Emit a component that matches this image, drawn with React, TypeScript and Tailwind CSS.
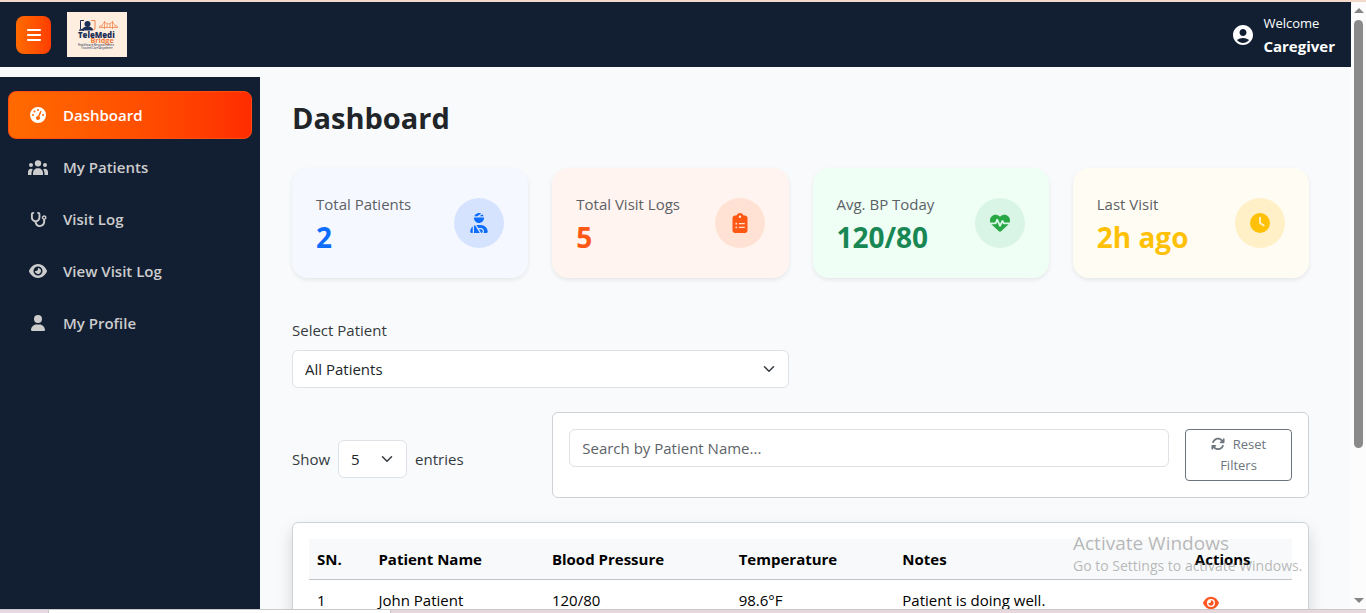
import { useState } from 'react'
import {
  FaArrowsRotate,
  FaBars,
  FaClipboardList,
  FaClock,
  FaEye,
  FaGaugeHigh,
  FaHeartPulse,
  FaStethoscope,
  FaUser,
  FaUserInjured,
} from 'react-icons/fa6'
import { MdAccountCircle } from 'react-icons/md'

const PatientsIcon = () => (
  <svg viewBox="0 0 60 45" className="h-[15px] w-5 shrink-0" fill="currentColor">
    <circle cx="30" cy="10" r="9.5" />
    <circle cx="9" cy="15" r="6" />
    <circle cx="51" cy="15" r="6" />
    <path d="M15 45v-5c0-9 6-15 15-15s15 6 15 15v5z" />
    <path d="M0 45v-9c0-6 4-10 9-10 2 0 4 .5 5.500 1.500C12 31 10.500 35 10.500 40v5z" />
    <path d="M60 45v-9c0-6-4-10-9-10-2 0-4 .5-5.500 1.500C48 31 49.500 35 49.500 40v5z" />
  </svg>
)

const navItems = [
  { label: 'Dashboard', icon: <FaGaugeHigh className="h-4 w-4" /> },
  { label: 'My Patients', icon: <PatientsIcon /> },
  { label: 'Visit Log', icon: <FaStethoscope className="h-[17px] w-[17px]" /> },
  { label: 'View Visit Log', icon: <FaEye className="h-4 w-[18px]" /> },
  { label: 'My Profile', icon: <FaUser className="h-4 w-4" /> },
]

const stats = [
  { label: 'Total Patients', value: '2', icon: FaUserInjured, card: 'bg-[#f6f8ff]', text: 'text-[#0d6efd]', badge: 'bg-[#d6e3ff] text-[#0d6efd]' },
  { label: 'Total Visit Logs', value: '5', icon: FaClipboardList, card: 'bg-[#fff4ef]', text: 'text-[#ff5714]', badge: 'bg-[#ffe2d4] text-[#ff5714]' },
  { label: 'Avg. BP Today', value: '120/80', icon: FaHeartPulse, card: 'bg-[#effff6]', text: 'text-[#198754]', badge: 'bg-[#d9f5e5] text-[#28a745]' },
  { label: 'Last Visit', value: '2h ago', icon: FaClock, card: 'bg-[#fffdf3]', text: 'text-[#ffc107]', badge: 'bg-[#fff0c7] text-[#ffc107]' },
]

const visits = [
  { id: 1, name: 'John Patient', bp: '120/80', temp: '98.6°F', notes: 'Patient is doing well.' },
]

const Logo = () => (
  <svg viewBox="0 0 60 45" className="h-[45px] w-[60px]" role="img" aria-label="TeleMedi Bridge">
    <rect width="60" height="45" fill="#fdeee0" />
    <path d="M17 8.500h-3.500v9h3" fill="none" stroke="#1b2f57" strokeWidth="1" />
    <path d="M24 8.500h4v8.500l-2 1" fill="none" stroke="#f08650" strokeWidth="1" />
    <circle cx="20.500" cy="12" r="3" fill="#1b2f57" />
    <path d="M15 18.500c0-3 2.500-4 5.500-4s5.500 1 5.500 4z" fill="#1b2f57" />
    <path d="M12 18.200h5" stroke="#1b2f57" strokeWidth="1.200" />
    <path
      d="M32 15.500h19M37.500 9v8M45.500 9v8M32 14.500c3-.5 4.500-2.500 5.500-5 1.500 3 6.500 3 8 0 1 2.500 2.500 4.500 5.500 5M40 11.500v4M43 11.500v4M35 13.500v2M48 13.500v2"
      fill="none"
      stroke="#f08650"
      strokeWidth="0.8"
    />
    <text x="11" y="25.500" fontSize="7.800" fontWeight="800" fill="#1b2f57" fontFamily="Open Sans, sans-serif">TeleMedi</text>
    <text x="23.500" y="31" fontSize="7.200" fontWeight="700" fill="#f07b3c" fontFamily="Open Sans, sans-serif">Bridge</text>
    <text x="11" y="34" fontSize="2.900" fontWeight="600" fill="#4a5470" fontFamily="Open Sans, sans-serif">Healthcare Beyond Limits</text>
    <text x="14" y="37" fontSize="2.800" fontWeight="600" fill="#4a5470" fontFamily="Open Sans, sans-serif">Trusted Care Anywhere</text>
  </svg>
)

const Chevron = () => (
  <svg
    viewBox="0 0 16 16"
    className="pointer-events-none absolute top-1/2 right-3.5 h-3 w-3 -translate-y-1/2"
    fill="none"
    stroke="#343a40"
    strokeWidth="2"
    strokeLinecap="round"
    strokeLinejoin="round"
  >
    <path d="m2 5 6 6 6-6" />
  </svg>
)

const Header = () => (
  <header className="flex h-[65px] items-center justify-between bg-[#121f33] px-4 text-white">
    <div className="flex items-center gap-4">
      <button
        aria-label="Toggle menu"
        className="flex h-[38px] w-[35px] items-center justify-center rounded-lg bg-linear-to-r from-[#ff6a00] to-[#ff3c00]"
      >
        <FaBars className="h-4 w-3.5" />
      </button>
      <Logo />
    </div>
    <div className="flex items-center gap-2">
      <MdAccountCircle className="h-6 w-6" />
      <div className="leading-[23px]">
        <div className="text-[13px]">Welcome</div>
        <div className="text-[15px] font-bold">Caregiver</div>
      </div>
    </div>
  </header>
)

const Sidebar = () => (
  <nav className="flex w-[260px] shrink-0 flex-col gap-1 bg-[#121f33] px-2 py-3.5">
    {navItems.map(({ label, icon }, index) => (
      <a
        key={label}
        href="#"
        className={`flex h-12 items-center gap-[15px] rounded-lg px-[19px] text-[15px] font-semibold ${
          index === 0
            ? 'border border-[#ff4a10] bg-linear-to-r from-[#ff6a00] to-[#ff2c00] text-white'
            : 'border border-transparent text-[#cccccc]'
        }`}
      >
        <span className="flex w-5 justify-center">{icon}</span>
        {label}
      </a>
    ))}
  </nav>
)

const StatCards = () => (
  <div className="grid grid-cols-4 gap-6">
    {stats.map(({ label, value, icon: Icon, card, text, badge }) => (
      <div key={label} className={`flex items-center justify-between rounded-2xl p-6 shadow-[0_2px_4px_rgba(0,0,0,0.08)] ${card}`}>
        <div>
          <div className="text-[15px] leading-6 font-medium text-[#5c6166]">{label}</div>
          <div className={`pt-1 text-[28px] leading-[34px] font-bold ${text}`}>{value}</div>
        </div>
        <div className={`flex h-[50px] w-[50px] items-center justify-center rounded-full ${badge}`}>
          <Icon className="h-5 w-5" />
        </div>
      </div>
    ))}
  </div>
)

const VisitTable = () => (
  <div className="rounded-md border border-[#ced2d6] bg-white p-4 shadow-[0_8px_16px_rgba(0,0,0,0.15)]">
    <table className="w-full table-fixed text-left text-black">
      <thead>
        <tr className="border-b border-[#c0c4c8] bg-[#f8f9fa]">
          <th className="w-[6.25%] p-2 font-bold">SN.</th>
          <th className="w-[17.65%] p-2 font-bold">Patient Name</th>
          <th className="w-[19%] p-2 font-bold">Blood Pressure</th>
          <th className="w-[16.65%] p-2 font-bold">Temperature</th>
          <th className="p-2 font-bold">Notes</th>
          <th className="w-[10.7%] p-2 font-bold">Actions</th>
        </tr>
      </thead>
      <tbody>
        {visits.map((visit) => (
          <tr key={visit.id} className="border-b border-[#dee2e6]">
            <td className="p-2">{visit.id}</td>
            <td className="p-2">{visit.name}</td>
            <td className="p-2">{visit.bp}</td>
            <td className="p-2">{visit.temp}</td>
            <td className="p-2">{visit.notes}</td>
            <td className="p-2">
              <button aria-label="View visit" className="flex px-2 pt-1.5 text-[#ff5722]">
                <FaEye className="h-4 w-4" />
              </button>
            </td>
          </tr>
        ))}
      </tbody>
    </table>
  </div>
)

const App = () => {
  const [patient, setPatient] = useState('All Patients')
  const [pageSize, setPageSize] = useState('5')
  const [search, setSearch] = useState('')

  const resetFilters = () => {
    setPatient('All Patients')
    setSearch('')
  }

  return (
    <div className="relative flex h-screen flex-col overflow-hidden bg-[#f8fafc] font-['Open_Sans',sans-serif] text-[15px] leading-6 text-[#343a40]">
      <div className="h-0.5 shrink-0 bg-[#f3d9cc]" />
      <div className="flex min-h-0 flex-1">
        <div className="flex min-w-0 flex-1 flex-col overflow-hidden">
          <Header />
          <div className="flex min-h-0 flex-1 pt-2.5">
            <Sidebar />
            <main className="min-w-0 flex-1 overflow-hidden pt-[22px] pr-[42px] pl-8">
              <h1 className="mb-[31px] text-[29px] leading-[38px] font-bold text-[#212529]">Dashboard</h1>
              <StatCards />

              <div className="mt-10 grid grid-cols-2 gap-6">
                <div>
                  <label htmlFor="patient" className="mb-2 block">Select Patient</label>
                  <div className="relative">
                    <select
                      id="patient"
                      value={patient}
                      onChange={(e) => setPatient(e.target.value)}
                      className="h-[38px] w-full appearance-none rounded-md border border-[#dee2e6] bg-white px-3 text-[#212529]"
                    >
                      <option>All Patients</option>
                      <option>John Patient</option>
                    </select>
                    <Chevron />
                  </div>
                </div>
              </div>

              <div className="mt-6 mb-6 grid grid-cols-4 gap-6">
                <div className="flex items-center gap-2 self-end pb-5">
                  <label htmlFor="entries">Show</label>
                  <div className="relative">
                    <select
                      id="entries"
                      value={pageSize}
                      onChange={(e) => setPageSize(e.target.value)}
                      className="h-[38px] w-[69px] appearance-none rounded-md border border-[#dee2e6] bg-white px-3 text-[#212529]"
                    >
                      <option>5</option>
                      <option>10</option>
                      <option>25</option>
                    </select>
                    <Chevron />
                  </div>
                  <span>entries</span>
                </div>
                <div className="col-span-3 flex items-start gap-4 rounded-md border border-[#ced2d6] bg-white p-4">
                  <input
                    type="text"
                    aria-label="Search by Patient Name"
                    value={search}
                    onChange={(e) => setSearch(e.target.value)}
                    placeholder="Search by Patient Name..."
                    className="h-[38px] min-w-0 flex-1 rounded-md border border-[#dee2e6] px-3 placeholder:text-[#5c6369]"
                  />
                  <button
                    onClick={resetFilters}
                    className="w-[107px] rounded-sm border border-[#6c757d] px-2 py-1 text-[13px] leading-[21px] text-[#6c757d]"
                  >
                    <FaArrowsRotate className="mr-2 inline h-3.5 w-3.5 align-[-2px]" />
                    Reset Filters
                  </button>
                </div>
              </div>

              <VisitTable />
            </main>
          </div>
        </div>

        {/* Window scrollbar */}
        <div className="flex w-[15px] shrink-0 flex-col items-center bg-[#fcfcfc] pt-1.5 pb-1.5">
          <svg viewBox="0 0 10 5" className="h-[5px] w-[10px]"><path d="M5 0l5 5H0z" fill="#858585" /></svg>
          <div className="flex w-full flex-1 flex-col items-center pt-[7px]">
            <div className="h-[74%] w-[9px] rounded-full bg-[#8a8a8a]" />
          </div>
          <svg viewBox="0 0 10 5" className="h-[5px] w-[10px]"><path d="M0 0h10L5 5z" fill="#858585" /></svg>
        </div>
      </div>

      {/* Edge of the taskbar under the window */}
      <div className="flex h-1 shrink-0 border-t border-[#c9c9c9] bg-[#e6d8dc]">
        <div className="w-12 bg-[#e6d8e4]" />
        <div className="w-[343px] border-x border-[#c4c4c4] bg-white" />
        <div className="flex-1" />
      </div>

      <div className="pointer-events-none absolute right-[57px] bottom-9 w-[236px] whitespace-nowrap text-[#7f7f7f]/55">
        <div className="text-[19px] leading-6">Activate Windows</div>
        <div className="text-[14px] leading-[22px]">Go to Settings to activate Windows.</div>
      </div>
    </div>
  )
}

export default App
